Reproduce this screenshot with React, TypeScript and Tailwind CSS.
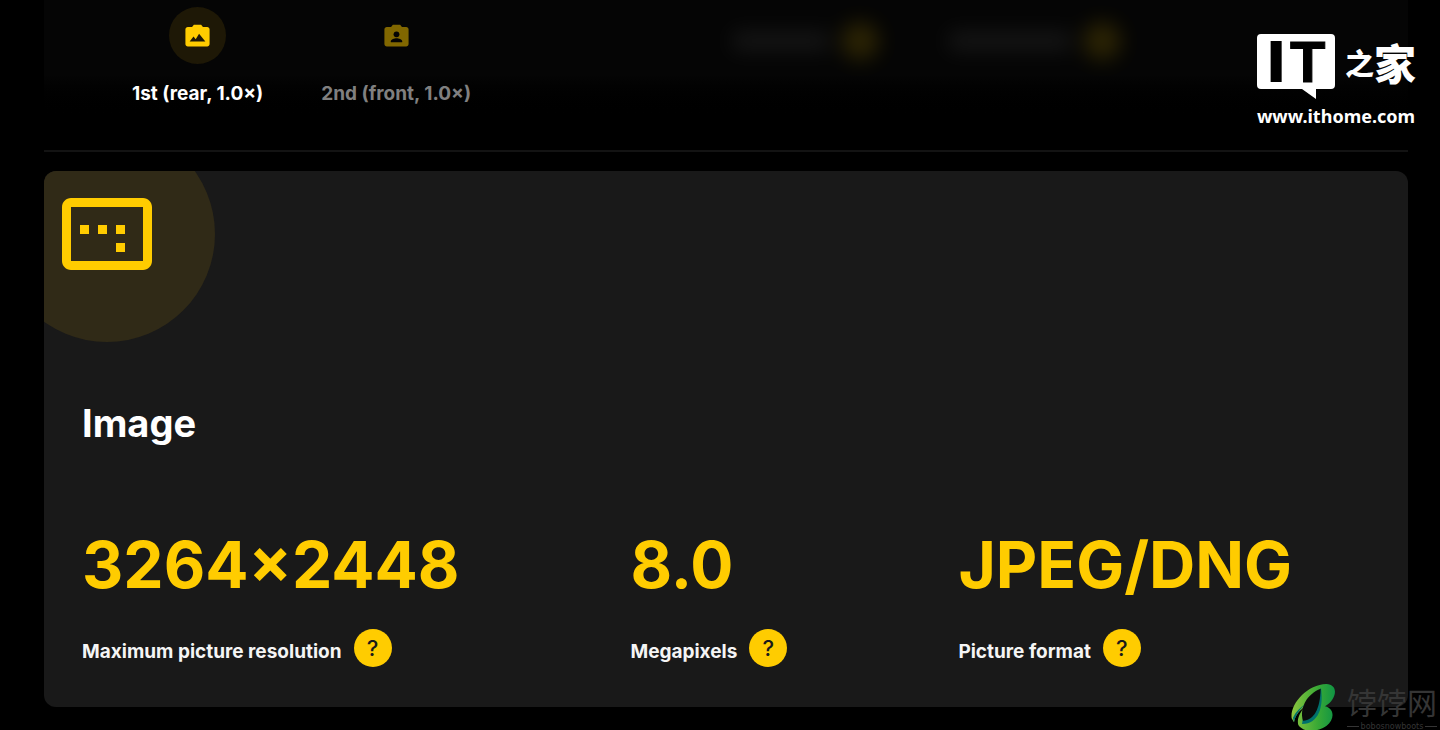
import type { ReactNode } from "react";
import { MdImageAspectRatio } from "react-icons/md";

const cameras = [
  {
    name: "1st (rear, 1.0×)",
    active: true,
    cutout: <path d="M5.5 17L8.7 12.8L10.5 15L13.3 10.5L18.5 17Z" />,
  },
  {
    name: "2nd (front, 1.0×)",
    active: false,
    cutout: (
      <>
        <circle cx="12" cy="11" r="2.4" />
        <path d="M7.3 17.5V16.7C7.3 15.1 10.4 14.3 12 14.3S16.7 15.1 16.7 16.7V17.5Z" />
      </>
    ),
  },
];

const specs = [
  { value: "3264×2448", label: "Maximum picture resolution" },
  { value: "8.0", label: "Megapixels" },
  { value: "JPEG/DNG", label: "Picture format" },
];

function CameraIcon({ active, children }: { active: boolean; children: ReactNode }) {
  return (
    <svg viewBox="0 0 24 24" className="size-[29px]" aria-hidden="true">
      <path d="M20 5H16.5L15 3H9L7.5 5H4C2.9 5 2 5.9 2 7V19C2 20.1 2.9 21 4 21H20C21.1 21 22 20.1 22 19V7C22 5.9 21.1 5 20 5Z" fill="currentColor" />
      <g className={active ? "fill-[#1e1806]" : "fill-[#040404]"}>{children}</g>
    </svg>
  );
}

function CameraTabs() {
  return (
    <nav className="flex items-start gap-[58px] pt-[7px]">
      {cameras.map(({ name, cutout, active }) => (
        <button key={name} type="button" className={`flex flex-col items-center gap-[18px] whitespace-nowrap text-[19px] font-bold leading-6 ${active ? "text-white" : "text-[#808080]"}`}>
          <span className={`flex size-[57px] items-center justify-center rounded-full ${active ? "bg-[#1e1806] text-[#ffcc00]" : "text-[#816700]"}`}>
            <CameraIcon active={active}>{cutout}</CameraIcon>
          </span>
          {name}
        </button>
      ))}
    </nav>
  );
}

function LockedSpecs() {
  return (
    <div className="flex items-start gap-[70px] pt-[22px] opacity-15" aria-hidden="true">
      <div className="flex items-center gap-3 blur-[10px]">
        <span className="h-5 w-24 bg-[#707070]" />
        <span className="size-[38px] rounded-full bg-[#ffcc00]" />
      </div>
      <div className="flex items-center gap-3 blur-[10px]">
        <span className="h-5 w-[122px] bg-[#707070]" />
        <span className="size-[38px] rounded-full bg-[#ffcc00]" />
      </div>
    </div>
  );
}

function Spec({ value, label }: { value: string; label: string }) {
  return (
    <div>
      <dd className="text-[64px] font-bold leading-[80px] text-[#ffcc00]">{value}</dd>
      <dt className="mt-6 flex items-end gap-3 text-[19px] font-bold leading-[30px] text-[#f5f5f5]">
        {label}
        <button type="button" aria-label={`About ${label}`} className="size-[38px] rounded-full bg-[#ffcc00] text-[22px] font-medium text-[#1a1a1a]">?</button>
      </dt>
    </div>
  );
}

function ItHomeMark() {
  return (
    <div className="absolute right-6 top-[34px] w-[160px] text-white">
      <svg viewBox="0 0 160 66" className="block h-[66px] w-full overflow-visible">
        <path d="M5 0H75Q79 0 79 4V51Q79 55 75 55H60V65L46 55H5Q1 55 1 51V4Q1 0 5 0Z" fill="#fff" />
        <text x="12" y="48" fontFamily="Inter, sans-serif" fontWeight="900" fontSize="56" fill="#000">I</text>
        <text x="34" y="48" fontFamily="'Liberation Sans', sans-serif" fontWeight="700" fontSize="58" fill="#000" stroke="#000" strokeWidth="1">T</text>
        <text x="89" y="41" fontFamily="'Noto Sans CJK SC', sans-serif" fontWeight="900" fontSize="29" fill="#fff">之</text>
        <text x="118" y="46" fontFamily="'Noto Sans CJK SC', sans-serif" fontWeight="900" fontSize="42" fill="#fff">家</text>
      </svg>
      <p className="mt-1 text-center font-['Noto_Sans',sans-serif] text-lg font-bold leading-6">www.ithome.com</p>
    </div>
  );
}

function BoboMark() {
  return (
    <div className="absolute bottom-0 right-[3px] flex items-end gap-1 text-[#353535]">
      <svg viewBox="0 0 180 150" className="h-[50px] w-[60px]" aria-hidden="true">
        <defs>
          <linearGradient id="leaf" x1="0" x2="1" y1="0" y2="0">
            <stop offset="0" stopColor="#8cc63f" />
            <stop offset="0.6" stopColor="#39a935" />
            <stop offset="1" stopColor="#109444" />
          </linearGradient>
        </defs>
        <path d="M26 112C20 70 72 10 130 9C168 10 162 56 126 76C155 83 156 115 130 135C105 153 62 156 46 132C41 115 50 95 65 78C45 92 36 106 33 124Z" fill="url(#leaf)" />
        <path d="M114 20C122 76 108 128 57 129L60 112Z" fill="#00706c" />
        <path d="M113 23C72 38 48 82 60 119C94 116 111 84 113 23Z" fill="#0b0b0b" />
        <path d="M30 110C38 92 52 80 66 70C48 88 36 106 33 124Z" fill="#00706c" />
      </svg>
      <div className="w-[90px]">
        <p className="font-['Noto_Sans_CJK_SC',sans-serif] text-[30px] leading-[42px]">饽饽网</p>
        <p className="flex items-center justify-between font-['DejaVu_Sans',sans-serif] text-[8px] leading-[9px]">
          <span className="h-px w-3 bg-current" />bobosnowboots<span className="h-px w-3 bg-current" />
        </p>
      </div>
    </div>
  );
}

export default function App() {
  return (
    <div className="relative min-h-screen overflow-hidden bg-black pb-6 pl-11 pr-8 font-['Inter',sans-serif]">
      <header className="flex h-[152px] gap-[262px] border-b-2 border-[#131313] bg-linear-to-b from-[#050505] from-50% to-black to-80% pl-[88px]">
        <CameraTabs />
        <LockedSpecs />
      </header>

      <section className="relative mt-[19px] overflow-hidden rounded-xl bg-[#191919] px-[38px] pb-10 pt-[228px]">
        <div className="absolute -left-[45px] -top-[45px] flex size-[216px] items-center justify-center rounded-full bg-[#302a17] text-[#ffcc00]">
          <MdImageAspectRatio className="size-[108px]" />
        </div>
        <h2 className="text-[38px] font-bold leading-[48px] text-white">Image</h2>
        <dl className="mt-[78px] flex gap-[171px]">
          {specs.map((s) => (
            <Spec key={s.label} {...s} />
          ))}
        </dl>
      </section>

      <ItHomeMark />
      <BoboMark />
    </div>
  );
}
